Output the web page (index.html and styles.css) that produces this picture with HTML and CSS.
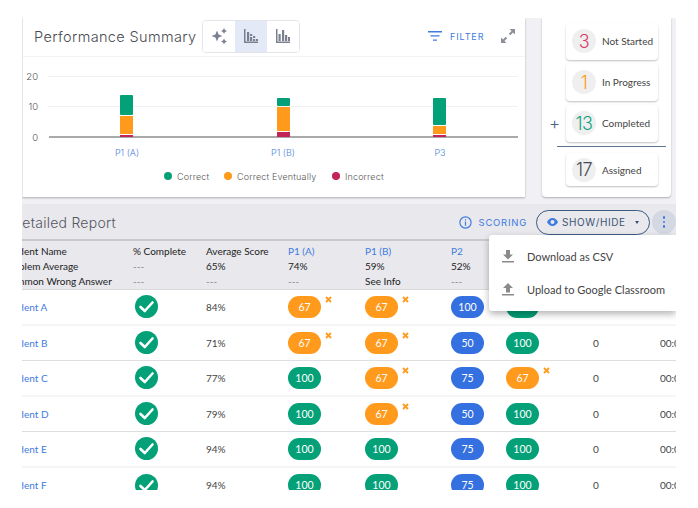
FILE: index.html
```html
<!DOCTYPE html>
<html lang="en">
<head>
<meta charset="utf-8">
<title>Performance Summary</title>
<link rel="stylesheet" href="styles.css">
</head>
<body>
<main class="app">
  <section class="top">
    <div class="card summary">
      <header class="summary-head">
        <h2 class="summary-title">Performance Summary</h2>
        <div class="toggle">
          <button class="toggle-btn"><svg width="18" height="18" viewBox="0 0 18 18"><path class="ico-grey" d="M7 3.500 8.600 7.400 12.500 9 8.600 10.600 7 14.500 5.400 10.600 1.500 9 5.400 7.400Z"/><path class="ico-grey" d="M14 1 15 3 17 4 15 5 14 7 13 5 11 4 13 3ZM14 11.500 15 13.500 17 14.500 15 15.500 14 17.500 13 15.500 11 14.500 13 13.500Z"/></svg></button>
          <button class="toggle-btn is-active"><svg width="16" height="16" viewBox="0 0 16 16"><path class="ico-grey" d="M1 1h1.500v12.500H15V15H1zM4 4h2.200v9H4zM7 9h2.200v4H7zM7 6h2.200v2H7zM10 8h2.200v2H10zM10 11h2.200v2H10zM13 11h2v2h-2z"/></svg></button>
          <button class="toggle-btn"><svg width="16" height="16" viewBox="0 0 16 16"><path class="ico-grey" d="M1 1h1.500v12.500H15V15H1zM3.500 6h2.200v7H3.500zM7 2h2.200v11H7zM10 7h2.200v6H10zM13 9h2v4h-2z"/></svg></button>
        </div>
        <button class="filter"><svg width="14" height="12" viewBox="0 0 14 12"><path class="ico-blue" d="M0 1h14v1.400H0zM2.500 5.200h9v1.400h-9zM5 9.400h4v1.400H5z"/></svg><span>FILTER</span></button>
        <svg class="expand" width="14" height="14" viewBox="0 0 14 14"><path class="ico-greyd" d="M8.500 0H14v5.500L12 3.400 9.200 6.200 7.800 4.800 10.600 2ZM5.500 14H0V8.500L2 10.600 4.800 7.800 6.200 9.200 3.400 12Z"/></svg>
      </header>
      <svg class="plot" width="502" height="140" viewBox="1 0 502 140">
        <line class="grid" x1="26" y1="19.500" x2="496" y2="19.500"/>
        <line class="grid" x1="26" y1="49.500" x2="496" y2="49.500"/>
        <line class="axis" x1="27" y1="80" x2="496" y2="80"/>
        <text class="tick" x="16" y="23" text-anchor="end">20</text>
        <text class="tick" x="16" y="53" text-anchor="end">10</text>
        <text class="tick" x="16" y="84" text-anchor="end">0</text>
        <rect class="c-green" x="98" y="38" width="13" height="20" rx="1"/>
        <rect class="c-orange" x="98" y="59" width="13" height="18"/>
        <rect class="c-red" x="98" y="78" width="13" height="2"/>
        <rect class="c-green" x="255" y="41" width="13" height="8" rx="1"/>
        <rect class="c-orange" x="255" y="50" width="13" height="24"/>
        <rect class="c-red" x="255" y="75" width="13" height="5"/>
        <rect class="c-green" x="411" y="41" width="13" height="27" rx="1"/>
        <rect class="c-orange" x="411" y="69" width="13" height="8"/>
        <rect class="c-red" x="411" y="78" width="13" height="2"/>
        <text class="xlabel" x="105" y="99" text-anchor="middle">P1 (A)</text>
        <text class="xlabel" x="261" y="99" text-anchor="middle">P1 (B)</text>
        <text class="xlabel" x="418" y="99" text-anchor="middle">P3</text>
        <circle class="c-green" cx="146" cy="119" r="4"/>
        <text class="legend" x="155" y="123">Correct</text>
        <circle class="c-orange" cx="206" cy="119" r="4"/>
        <text class="legend" x="215" y="123">Correct Eventually</text>
        <circle class="c-red" cx="314" cy="119" r="4"/>
        <text class="legend" x="323" y="123">Incorrect</text>
      </svg>
    </div>
    <aside class="card status">
      <div class="status-row"><span class="plus"></span><div class="tile"><span class="num n-red">3</span><span class="tile-label">Not Started</span></div></div>
      <div class="status-row"><span class="plus"></span><div class="tile"><span class="num n-orange">1</span><span class="tile-label">In Progress</span></div></div>
      <div class="status-row"><span class="plus">+</span><div class="tile"><span class="num n-green">13</span><span class="tile-label">Completed</span></div></div>
      <hr class="status-rule">
      <div class="status-row"><span class="plus"></span><div class="tile tile-short"><span class="num n-dark">17</span><span class="tile-label">Assigned</span></div></div>
    </aside>
  </section>

  <section class="detail">
    <header class="detail-head">
      <h2 class="detail-title">Detailed Report</h2>
      <button class="scoring"><svg width="13" height="13" viewBox="0 0 13 13"><circle class="ico-ring" cx="6.500" cy="6.500" r="5.600"/><path class="ico-blue" d="M5.900 5.500h1.200v4.200H5.900zM5.900 3.300h1.200v1.200H5.900z"/></svg><span>SCORING</span></button>
      <button class="showhide"><svg width="11" height="8" viewBox="0 0 11 8"><path class="ico-blue" fill-rule="evenodd" d="M5.500 0C8 0 10 1.700 11 4 10 6.300 8 8 5.500 8S1 6.300 0 4C1 1.700 3 0 5.500 0ZM5.500 2a2 2 0 1 0 0 4 2 2 0 0 0 0-4Z"/></svg><span>SHOW/HIDE</span><i class="caret"></i></button>
      <button class="kebab"><i></i><i></i><i></i></button>
    </header>

    <div class="table-clip">
      <table class="report">
        <colgroup><col class="c1"><col class="c2"><col class="c3"><col class="c4"><col class="c5"><col class="c6"><col class="c7"><col class="c8"><col class="c9"></colgroup>
        <thead>
          <tr class="head-first"><th>Student Name</th><th>% Complete</th><th>Average Score</th><th class="link">P1 (A)</th><th class="link">P1 (B)</th><th class="link">P2</th><th></th><th></th><th></th></tr>
          <tr><th>Problem Average</th><th class="dim">---</th><th>65%</th><th>74%</th><th>59%</th><th>52%</th><th></th><th></th><th></th></tr>
          <tr><th>Common Wrong Answer</th><th class="dim">---</th><th class="dim">---</th><th class="dim">---</th><th>See Info</th><th class="dim">---</th><th></th><th></th><th></th></tr>
        </thead>
        <tbody>
          <tr>
            <td class="link">Student A</td><td><svg class="check" width="23" height="23" viewBox="0 0 23 23"><circle class="c-green" cx="11.500" cy="11.500" r="11.500"/><path class="tick-mark" d="M5.500 12 9.800 16 17.500 7.500"/></svg></td><td>84%</td>
            <td><span class="pill p-orange">67<svg class="miss" width="7" height="7" viewBox="0 0 7 7"><path d="M1 1 6 6M6 1 1 6"/></svg></span></td>
            <td><span class="pill p-orange">67<svg class="miss" width="7" height="7" viewBox="0 0 7 7"><path d="M1 1 6 6M6 1 1 6"/></svg></span></td>
            <td><span class="pill p-blue">100</span></td><td><span class="pill p-green">100</span></td><td>0</td><td>00:00:10</td>
          </tr>
          <tr>
            <td class="link">Student B</td><td><svg class="check" width="23" height="23" viewBox="0 0 23 23"><circle class="c-green" cx="11.500" cy="11.500" r="11.500"/><path class="tick-mark" d="M5.500 12 9.800 16 17.500 7.500"/></svg></td><td>71%</td>
            <td><span class="pill p-orange">67<svg class="miss" width="7" height="7" viewBox="0 0 7 7"><path d="M1 1 6 6M6 1 1 6"/></svg></span></td>
            <td><span class="pill p-orange">67<svg class="miss" width="7" height="7" viewBox="0 0 7 7"><path d="M1 1 6 6M6 1 1 6"/></svg></span></td>
            <td><span class="pill p-blue">50</span></td><td><span class="pill p-green">100</span></td><td>0</td><td>00:00:10</td>
          </tr>
          <tr>
            <td class="link">Student C</td><td><svg class="check" width="23" height="23" viewBox="0 0 23 23"><circle class="c-green" cx="11.500" cy="11.500" r="11.500"/><path class="tick-mark" d="M5.500 12 9.800 16 17.500 7.500"/></svg></td><td>77%</td>
            <td><span class="pill p-green">100</span></td>
            <td><span class="pill p-orange">67<svg class="miss" width="7" height="7" viewBox="0 0 7 7"><path d="M1 1 6 6M6 1 1 6"/></svg></span></td>
            <td><span class="pill p-blue">75</span></td>
            <td><span class="pill p-orange">67<svg class="miss" width="7" height="7" viewBox="0 0 7 7"><path d="M1 1 6 6M6 1 1 6"/></svg></span></td><td>0</td><td>00:00:10</td>
          </tr>
          <tr>
            <td class="link">Student D</td><td><svg class="check" width="23" height="23" viewBox="0 0 23 23"><circle class="c-green" cx="11.500" cy="11.500" r="11.500"/><path class="tick-mark" d="M5.500 12 9.800 16 17.500 7.500"/></svg></td><td>79%</td>
            <td><span class="pill p-green">100</span></td>
            <td><span class="pill p-orange">67<svg class="miss" width="7" height="7" viewBox="0 0 7 7"><path d="M1 1 6 6M6 1 1 6"/></svg></span></td>
            <td><span class="pill p-blue">50</span></td><td><span class="pill p-green">100</span></td><td>0</td><td>00:00:10</td>
          </tr>
          <tr>
            <td class="link">Student E</td><td><svg class="check" width="23" height="23" viewBox="0 0 23 23"><circle class="c-green" cx="11.500" cy="11.500" r="11.500"/><path class="tick-mark" d="M5.500 12 9.800 16 17.500 7.500"/></svg></td><td>94%</td>
            <td><span class="pill p-green">100</span></td><td><span class="pill p-green">100</span></td>
            <td><span class="pill p-blue">75</span></td><td><span class="pill p-green">100</span></td><td>0</td><td>00:00:10</td>
          </tr>
          <tr>
            <td class="link">Student F</td><td><svg class="check" width="23" height="23" viewBox="0 0 23 23"><circle class="c-green" cx="11.500" cy="11.500" r="11.500"/><path class="tick-mark" d="M5.500 12 9.800 16 17.500 7.500"/></svg></td><td>94%</td>
            <td><span class="pill p-green">100</span></td><td><span class="pill p-green">100</span></td>
            <td><span class="pill p-blue">75</span></td><td><span class="pill p-green">100</span></td><td>0</td><td>00:00:10</td>
          </tr>
        </tbody>
      </table>
    </div>

    <div class="menu">
      <div class="menu-item"><svg width="12" height="13" viewBox="0 0 12 13"><path class="ico-menu" d="M4 0h4v4.500h3L6 9.500 1 4.500h3zM0 11h12v1.500H0z"/></svg><span>Download as CSV</span></div>
      <div class="menu-item"><svg width="12" height="13" viewBox="0 0 12 13"><path class="ico-menu" d="M6 0l5 5H8v4.500H4V5H1zM0 11h12v1.500H0z"/></svg><span>Upload to Google Classroom</span></div>
    </div>
  </section>
</main>
</body>
</html>
```

FILE: styles.css
```css
* { box-sizing: border-box; }
html, body { margin: 0; padding: 0; background: #fff; }
body { width: 698px; height: 508px; overflow: hidden; font-family: "Lato", sans-serif; }
button { font: inherit; background: none; border: 0; padding: 0; display: flex; align-items: center; }
h2 { margin: 0; font-weight: 400; }

.app { margin: 18px 0 0 22px; width: 654px; height: 472px; background: #f1f1f5; overflow: hidden; }

.top { display: flex; gap: 17px; height: 179px; }
.card { background: #fff; box-shadow: 0 1px 2px rgba(0,0,0,.28); }
.summary { width: 503px; border-left: 1px solid #e6e6e8; }
.summary-head { height: 39px; display: flex; align-items: center; border-bottom: 1px solid #f3f3f5; padding: 0 0 2px 11px; }
.summary-title { font-family: "Inter", sans-serif; font-size: 14.500px; font-weight: 300; color: #4a4a50; letter-spacing: .36px; width: 168px; white-space: nowrap; }
.toggle { display: flex; height: 33px; border: 1px solid #e4e4ea; border-radius: 4px; overflow: hidden; }
.toggle-btn { width: 32px; justify-content: center; background: #fff; }
.toggle-btn.is-active { background: #e4e9f8; }
.filter { margin-left: 128px; gap: 8px; color: #3f7be0; font-family: "Inter", sans-serif; font-size: 9px; letter-spacing: .9px; }
.expand { margin-left: 17px; }
.ico-grey { fill: #7a8090; }
.ico-greyd { fill: #8a8f98; }
.ico-blue { fill: #3f7be0; }
.ico-ring { fill: none; stroke: #3f7be0; stroke-width: 1.200; }
.ico-menu { fill: #8a8a8a; }

.plot { display: block; }
.grid { stroke: #f1f1f3; stroke-width: 1; }
.axis { stroke: #55555a; stroke-width: 1; }
.tick { font: 300 9.500px "Inter", sans-serif; fill: #555; }
.xlabel { font: 300 9px "Inter", sans-serif; fill: #4f7fdc; }
.legend { font: 300 9px "Inter", sans-serif; fill: #555; letter-spacing: .15px; }
.c-green { fill: #04a077; }
.c-orange { fill: #ff9a1c; }
.c-red { fill: #c2245a; }

.status { width: 129px; border-radius: 0 0 4px 4px; padding-top: 2.500px; }
.status-row { display: flex; align-items: center; height: 41px; }
.plus { width: 24px; padding-left: 7px; font: 300 17px "Inter", sans-serif; color: #4c6380; line-height: 1; }
.tile { width: 92px; height: 37px; display: flex; align-items: center; gap: 6px; padding-left: 6px; border-radius: 4px; background: #fff; box-shadow: 0 1px 2px rgba(0,0,0,.25); }
.tile-short { height: 33px; }
.num { width: 24px; height: 24px; border-radius: 50%; background: #efefef; display: flex; align-items: center; justify-content: center; font: 300 18px "Inter", sans-serif; letter-spacing: -.5px; }
.n-red { color: #d83a6c; }
.n-orange { color: #ff9a1c; }
.n-green { color: #14a37f; }
.n-dark { color: #444a55; }
.tile-label { font-size: 10px; color: #444; white-space: nowrap; }
.status-rule { margin: 2.500px 0 2px 15px; width: 109px; height: 1px; border: 0; background: #5b7490; }

.detail { position: relative; margin-top: 7px; }
.detail-head { height: 37px; background: #e8e8ed; border-bottom: 2px solid #c9c9cc; display: flex; align-items: center; padding-top: 1px; }
.detail-title { margin-left: -10px; font-family: "Inter", sans-serif; font-size: 14px; font-weight: 300; color: #55565e; letter-spacing: .25px; white-space: nowrap; }
.scoring { margin-left: auto; gap: 7px; color: #3f7be0; font-size: 9.500px; letter-spacing: .75px; font-family: "Inter", sans-serif; font-weight: 400; margin-right: 9px; }
.showhide { width: 114px; height: 25px; border: 1.300px solid #3c5c82; border-radius: 13px; padding-left: 10px; gap: 4px; color: #3c5474; font-size: 10px; letter-spacing: .6px; font-family: "Inter", sans-serif; white-space: nowrap; }
.caret { margin-left: 5px; border: 2.500px solid transparent; border-top: 3px solid #3c5474; border-bottom: 0; }
.kebab { margin: 0 0 0 2px; width: 24px; height: 24px; border-radius: 50%; background: #d3d8e3; flex-direction: column; justify-content: center; gap: 2px; }
.kebab i { width: 2.500px; height: 2.500px; border-radius: 50%; background: #3f7be0; }

.table-clip { height: 249px; overflow: hidden; background: #fff; }
.report { margin-left: -18px; width: 712px; table-layout: fixed; border-collapse: collapse; font-size: 10px; color: #444; white-space: nowrap; }
.c1 { width: 129px; }
.c2 { width: 73px; }
.c3 { width: 82px; }
.c4 { width: 77px; }
.c5 { width: 86px; }
.c6 { width: 55px; }
.c7 { width: 87px; }
.c8 { width: 67px; }
.c9 { width: 56px; }
.report th, .report td { padding: 0; text-align: left; }
.report thead { background: #e8e8ed; }
.report thead th { font-weight: 400; height: 15px; color: #222; line-height: 15px; vertical-align: bottom; }
.report .head-first th { height: 17.500px; }
.report thead tr:last-child th { border-bottom: 1px solid #d8d8da; }
.report .link { color: #3f7be0; }
.report .dim { color: #888; }
.report tbody td { height: 35.600px; vertical-align: middle; }
.report tbody tr:nth-child(odd) td { border-bottom: 2px solid #f5f5f6; }
.report tbody tr:nth-child(even) td { border-bottom: 1px solid #dedee0; }
.check { display: block; margin-left: 2px; }
.tick-mark { fill: none; stroke: #fff; stroke-width: 2.600; stroke-linecap: round; stroke-linejoin: round; }
.pill { position: relative; display: flex; align-items: center; justify-content: center; width: 33px; height: 22px; border-radius: 11px; color: #fff; font-size: 10.500px; }
.p-orange { background: #ff9a1c; }
.p-blue { background: #3570e0; }
.p-green { background: #04a077; }
.miss { position: absolute; left: 37px; top: 0; }
.miss path { stroke: #ff9a1c; stroke-width: 1.800; fill: none; }

.menu { position: absolute; left: 467px; top: 31px; width: 187px; height: 76px; background: #fff; border-radius: 3px 0 0 3px; box-shadow: 0 3px 7px rgba(0,0,0,.3); padding-top: 5px; }
.menu-item { height: 33px; display: flex; align-items: center; gap: 13px; padding-left: 13px; color: #444; font-size: 11px; white-space: nowrap; }
```
